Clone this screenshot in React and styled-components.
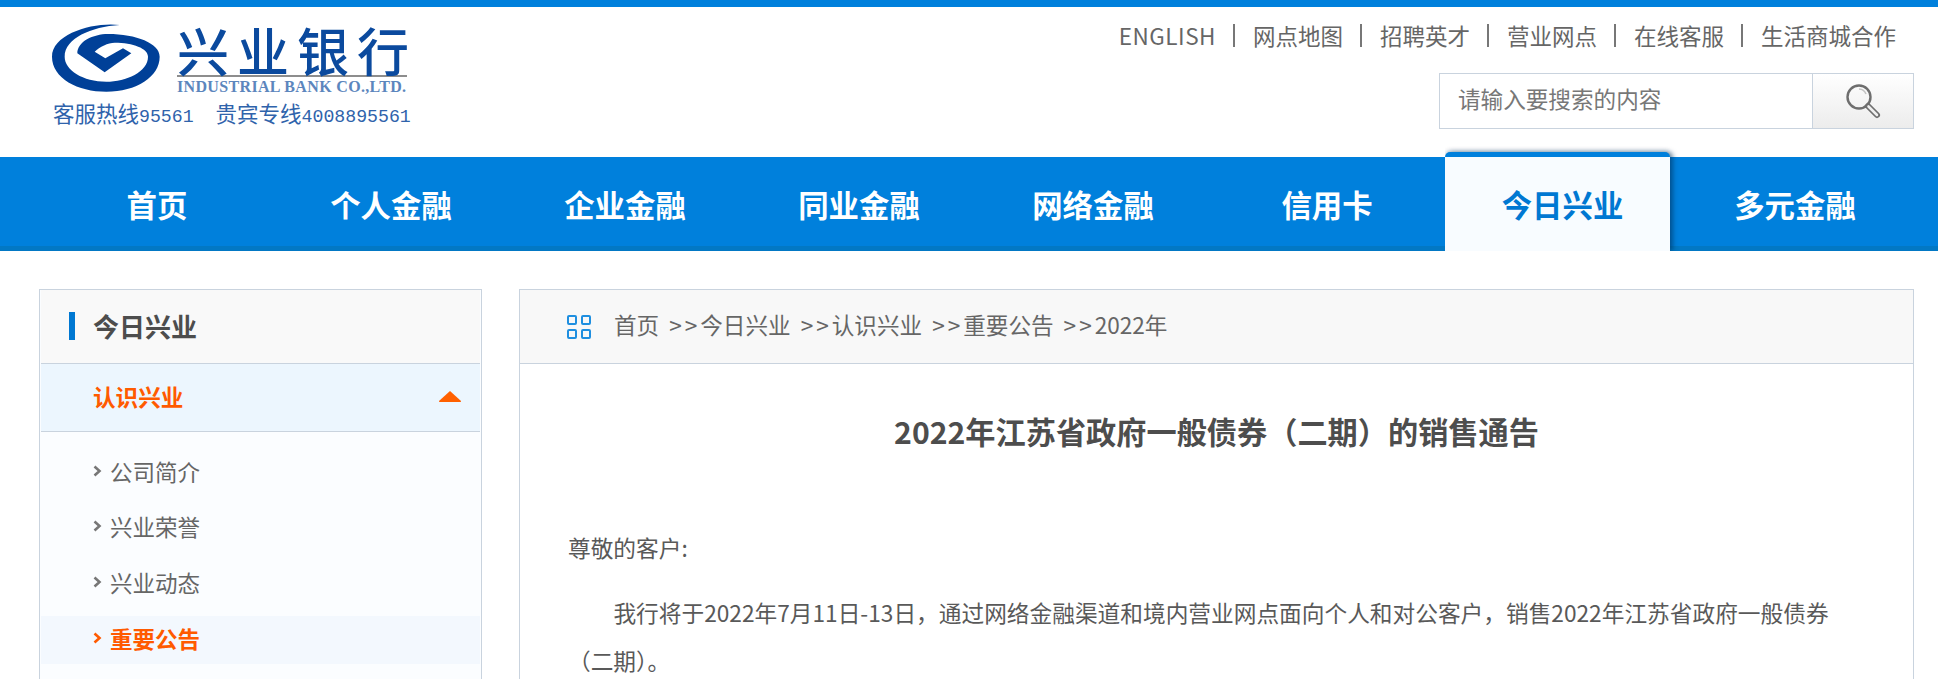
import React from "react";
import styled, { createGlobalStyle } from "styled-components";

const Global = createGlobalStyle`
  html, body { margin: 0; padding: 0; height: 100%; overflow: hidden; background: #fff; }
  body { font-family: "Noto Sans CJK SC", "Noto Sans", sans-serif; color: #595959; }
  * { box-sizing: border-box; }
`;

const Page = styled.div`
  height: 679px;
  overflow: hidden;
  border-top: 7px solid #0080dc;
`;

const Header = styled.header`
  height: 150px;
  display: flex;
  justify-content: space-between;
  padding: 13px 24px 0 48px;
`;

const Brand = styled.div`
  display: flex;
  flex-direction: column;
`;

const BrandTop = styled.div`
  display: flex;
  gap: 13px;
`;

const Emblem = styled.svg`
  width: 116px;
  height: 76px;
  filter: blur(0.5px);
`;

const Wordmark = styled.div`
  width: 230px;
  display: flex;
  flex-direction: column;
  padding-top: 5px;
`;

const BrandName = styled.div`
  height: 50px;
  font-size: 52px;
  line-height: 50px;
  font-weight: 500;
  letter-spacing: 8px;
  white-space: nowrap;
  color: #0b4a9e;
  filter: blur(0.4px);
`;

const BrandRule = styled.div`
  height: 2px;
  background: #8d8d8d;
`;

const BrandEnglish = styled.div`
  margin-top: 2px;
  font-family: "Liberation Serif", serif;
  font-weight: 700;
  font-size: 16px;
  line-height: 15px;
  letter-spacing: 0.34px;
  white-space: nowrap;
  color: #5c86bd;
`;

const Hotlines = styled.div`
  display: flex;
  gap: 22px;
  margin-top: 4px;
  padding-left: 5px;
  font-size: 21.5px;
  line-height: 26px;
  color: #2f63ab;
`;

const Hotline = styled.span`
  white-space: nowrap;
`;

const HotlineNumber = styled.span`
  font-family: "Liberation Mono", monospace;
  font-size: 18.2px;
`;

const Tools = styled.div`
  display: flex;
  flex-direction: column;
  align-items: flex-end;
  padding-top: 4px;
`;

const TopLinks = styled.nav`
  display: flex;
  align-items: center;
`;

const TopLink = styled.a`
  font-size: 22.5px;
  line-height: 23px;
  height: 23px;
  color: #666;
  padding: 0 17px 0 18px;
  border-right: 2px solid #777;
  letter-spacing: ${(p) => (p.$latin ? "0.5px" : "0")};
  white-space: nowrap;
  &:last-child { border-right: 0; padding-right: 18px; }
`;

const Search = styled.div`
  width: 475px;
  height: 56px;
  margin-top: 26px;
  display: flex;
  border: 1px solid #c9d3de;
`;

const SearchInput = styled.div`
  flex: 1;
  padding-left: 18px;
  font-size: 22.6px;
  line-height: 50px;
  color: #777;
`;

const SearchButton = styled.div`
  width: 101px;
  border-left: 1px solid #c9d3de;
  background: linear-gradient(#ffffff, #ececec);
  display: flex;
  align-items: center;
  justify-content: center;
`;

const NavBar = styled.nav`
  height: 94px;
  background: #0080dc;
  border-bottom: 5px solid #0278c4;
  padding-left: 40px;
  display: flex;
`;

const NavItem = styled.a`
  position: relative;
  width: 234px;
  height: 94px;
  display: flex;
  align-items: center;
  justify-content: center;
  padding: 0 0 1px ${(p) => (p.$active ? "3px" : "0")};
  font-size: 30.4px;
  font-weight: 700;
  color: ${(p) => (p.$active ? "#0078d2" : "#fff")};
  &::before {
    content: ${(p) => (p.$active ? '""' : "none")};
    position: absolute;
    left: 1px;
    width: 225px;
    top: -5px;
    bottom: 0;
    background: #f8fcff;
    border-top: 5px solid #0080dc;
    border-radius: 5px 5px 0 0;
    box-shadow: 3px 0 5px rgba(0, 50, 90, 0.55), 0 -2px 4px rgba(0, 50, 90, 0.15);
    clip-path: inset(-8px -12px 0 0);
  }
`;

const NavLabel = styled.span`
  position: relative;
`;

const Main = styled.main`
  display: flex;
  gap: 37px;
  padding: 38px 24px 0 39px;
`;

const Sidebar = styled.aside`
  width: 443px;
  flex: none;
  border: 1px solid #c9d3de;
  padding: 0 1px;
  background: #fbfdff;
`;

const SideHeading = styled.h2`
  margin: 0;
  height: 74px;
  display: flex;
  align-items: center;
  gap: 18px;
  padding: 0 0 2px 28px;
  background: #f9f9f9;
  font-size: 26px;
  font-weight: 700;
  color: #4d4d4d;
  border-bottom: 1px solid #c9d3de;
  &::before {
    content: "";
    width: 6px;
    height: 28px;
    background: #0078d2;
  }
`;

const SideGroup = styled.div`
  height: 68px;
  display: flex;
  align-items: center;
  justify-content: space-between;
  padding: 0 18px 2px 52px;
  background: #ecf6fe;
  border-bottom: 1px solid #c9d3de;
  font-size: 22.6px;
  font-weight: 700;
  color: #ff5a00;
`;

const SideList = styled.ul`
  list-style: none;
  margin: 0;
  padding: 13px 0 0;
`;

const SideItem = styled.li`
  height: ${(p) => (p.$active ? "48px" : "55.6px")};
  margin-top: ${(p) => (p.$active ? "4px" : "0")};
  display: flex;
  align-items: center;
  gap: 8px;
  padding: 0 0 ${(p) => (p.$active ? "3px" : "4px")} 52px;
  font-size: 22.5px;
  font-weight: ${(p) => (p.$active ? 700 : 400)};
  color: ${(p) => (p.$active ? "#ff5a00" : "#666")};
  background: ${(p) => (p.$active ? "#f3f8fe" : "transparent")};
`;

const Article = styled.section`
  flex: 1;
  border: 1px solid #c9d3de;
  border-bottom: 0;
`;

const Crumbs = styled.div`
  height: 74px;
  display: flex;
  align-items: center;
  gap: 23px;
  padding-left: 47px;
  background: #f8f8f8;
  border-bottom: 1px solid #c9d3de;
  font-size: 22.6px;
  color: #666;
  white-space: nowrap;
`;

const CrumbText = styled.span`
  padding-bottom: 4px;
`;

const CrumbSep = styled.span`
  padding-left: 10px;
  letter-spacing: 3px;
`;

const ArticleBody = styled.div`
  padding: 37px 64px 0 48px;
`;

const Title = styled.h1`
  margin: 0 0 63px;
  padding-left: 16px;
  font-size: 30.2px;
  line-height: 60px;
  font-weight: 700;
  text-align: center;
  color: #4d4d4d;
`;

const Para = styled.p`
  margin: 0 0 17px;
  font-size: 22.7px;
  line-height: 48px;
  color: #595959;
  text-indent: ${(p) => (p.$indent ? "2em" : "0")};
`;

const Chevron = ({ color }) => (
  <svg width="9" height="12" viewBox="0 0 9 12" fill="none">
    <path d="M1.5 1.5 L6.5 6 L1.5 10.5" stroke={color} strokeWidth="2.6" />
  </svg>
);

const navItems = ["首页", "个人金融", "企业金融", "同业金融", "网络金融", "信用卡", "今日兴业", "多元金融"];
const topLinks = ["ENGLISH", "网点地图", "招聘英才", "营业网点", "在线客服", "生活商城合作"];
const subItems = ["公司简介", "兴业荣誉", "兴业动态"];
const crumbs = ["今日兴业", "认识兴业", "重要公告", "2022年"];

export default function App() {
  return (
    <Page>
      <Global />
      <Header>
        <Brand>
          <BrandTop>
            <Emblem viewBox="0 0 348 228">
              <path
                fill="#004098"
                d="M215 15 C140 5 12 40 12 110 C12 175 90 215 175 215 C265 215 335 170 335 110 C335 70 265 42 180 42 C135 42 88 65 88 100 L170 157 L250 100 L225 85 L172 115 L140 95 C155 80 180 68 200 68 C255 68 300 85 300 110 C300 155 235 185 175 185 C105 185 50 150 50 110 C50 55 130 20 215 15 Z"
              />
            </Emblem>
            <Wordmark>
              <BrandName>兴业银行</BrandName>
              <BrandRule />
              <BrandEnglish>INDUSTRIAL BANK CO.,LTD.</BrandEnglish>
            </Wordmark>
          </BrandTop>
          <Hotlines>
            <Hotline>客服热线<HotlineNumber>95561</HotlineNumber></Hotline>
            <Hotline>贵宾专线<HotlineNumber>4008895561</HotlineNumber></Hotline>
          </Hotlines>
        </Brand>
        <Tools>
          <TopLinks>
            {topLinks.map((t) => (
              <TopLink key={t} $latin={t === "ENGLISH"}>{t}</TopLink>
            ))}
          </TopLinks>
          <Search>
            <SearchInput>请输入要搜索的内容</SearchInput>
            <SearchButton>
              <svg width="38" height="38" viewBox="0 0 38 38" fill="none">
                <circle cx="15" cy="15" r="11.5" stroke="#6e6e6e" strokeWidth="2.4" />
                <path d="M15 7 A8 8 0 0 1 22 12" stroke="#c4c4c4" strokeWidth="1.6" />
                <path d="M24 24 L33 33" stroke="#6e6e6e" strokeWidth="6" strokeLinecap="round" />
                <path d="M24.5 24.5 L33 33" stroke="#efefef" strokeWidth="2.6" strokeLinecap="round" />
              </svg>
            </SearchButton>
          </Search>
        </Tools>
      </Header>
      <NavBar>
        {navItems.map((t) => (
          <NavItem key={t} $active={t === "今日兴业"}>
            <NavLabel>{t}</NavLabel>
          </NavItem>
        ))}
      </NavBar>
      <Main>
        <Sidebar>
          <SideHeading>今日兴业</SideHeading>
          <SideGroup>
            认识兴业
            <svg width="24" height="13" viewBox="0 0 24 13">
              <path d="M12 1 L23 11 Q23.5 12 22 12 L2 12 Q0.5 12 1 11 Z" fill="#ff6000" />
            </svg>
          </SideGroup>
          <SideList>
            {subItems.map((t) => (
              <SideItem key={t}>
                <Chevron color="#777" />
                {t}
              </SideItem>
            ))}
            <SideItem $active>
              <Chevron color="#ff5a00" />
              重要公告
            </SideItem>
          </SideList>
        </Sidebar>
        <Article>
          <Crumbs>
            <svg width="24" height="24" viewBox="0 0 24 24" fill="none" stroke="#1f8fe0" strokeWidth="2">
              <rect x="1" y="1" width="8" height="8" rx="1" />
              <rect x="15" y="1" width="8" height="8" rx="1" />
              <rect x="1" y="15" width="8" height="8" rx="1" />
              <rect x="15" y="15" width="8" height="8" rx="1" />
            </svg>
            <CrumbText>
              首页
              {crumbs.map((c) => (
                <React.Fragment key={c}>
                  <CrumbSep>&gt;&gt;</CrumbSep>
                  {c}
                </React.Fragment>
              ))}
            </CrumbText>
          </Crumbs>
          <ArticleBody>
            <Title>2022年江苏省政府一般债券（二期）的销售通告</Title>
            <Para>尊敬的客户:</Para>
            <Para $indent>
              我行将于2022年7月11日-13日，通过网络金融渠道和境内营业网点面向个人和对公客户，销售2022年江苏省政府一般债券（二期）。
            </Para>
          </ArticleBody>
        </Article>
      </Main>
    </Page>
  );
}
